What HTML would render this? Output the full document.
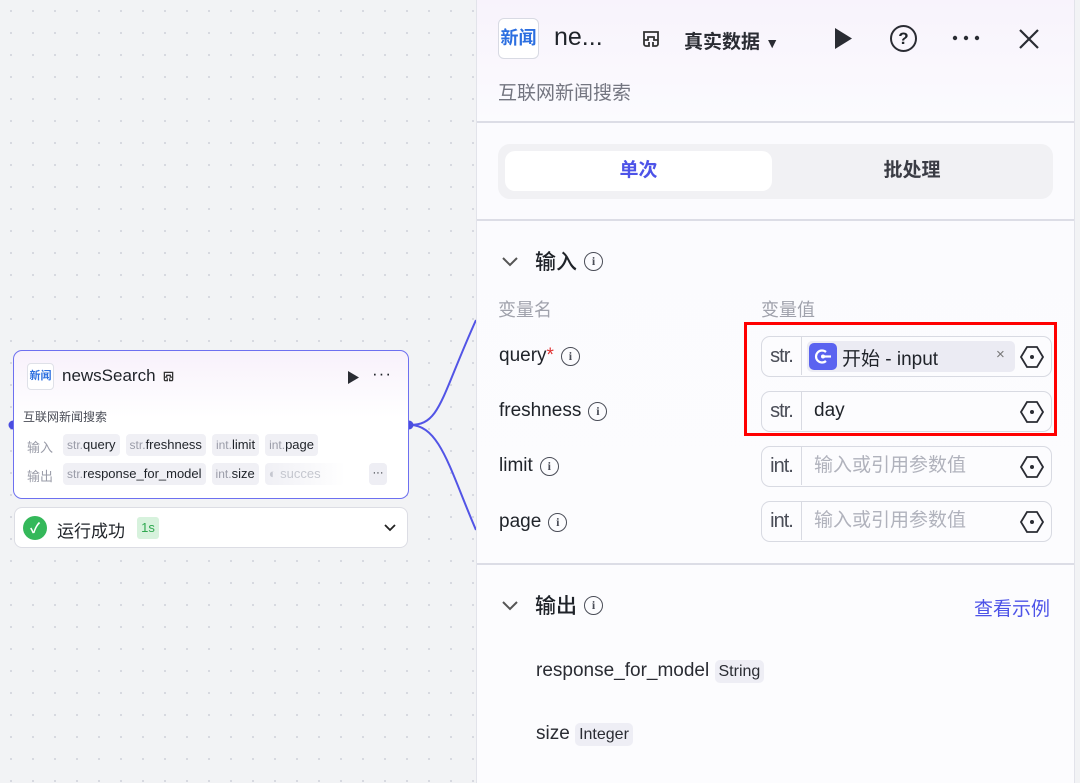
<!DOCTYPE html>
<html><head><meta charset="utf-8"><style>
*{box-sizing:border-box;margin:0;padding:0}
body{width:1080px;height:783px;overflow:hidden;position:relative;font-family:"Liberation Sans","Noto Sans CJK SC",sans-serif;background-color:#f2f3f5;background-image:radial-gradient(#d5d7de 1px,transparent 1.2px);background-size:22px 22px;color:#1f2329}
.abs{position:absolute}
.node{left:13px;top:350px;width:396px;height:149px;border:1.5px solid #6d70f0;border-radius:9px;background:linear-gradient(#f8f1fb,#fff 45%)}
.row{position:absolute;left:49px;display:flex;gap:6px;white-space:nowrap}
.tag{display:inline-block;background:#f0f0f5;border-radius:4px;padding:0 4px;font-size:13px;color:#1f2329;height:22px;line-height:22px}
.tag i{font-style:normal;color:#9a9ca8;font-size:12px}
.panel{left:476px;top:0;width:599px;height:783px;background:linear-gradient(#f8f3fc 0,#fbfbfe 120px,#fcfcfe);border-left:1px solid #e2e3ea;border-right:1px solid #e2e3ea}
.hr{position:absolute;left:0;right:0;height:1.5px;background:#dcdde6}
.lbl{position:absolute;left:22px;font-size:19px;color:#1f2329;display:flex;align-items:center;height:24px}
.info{display:inline-block;width:19px;height:19px;border:1.6px solid #4a4d57;border-radius:50%;font-size:12px;text-align:center;line-height:16px;color:#4a4d57;font-family:"Liberation Serif",serif;font-weight:bold;margin-left:7px}
.inp{position:absolute;left:284px;width:291px;height:41px;border:1.5px solid #d8dae2;border-radius:9px;background:#fcfcfe}
.inp .t{position:absolute;left:0;top:0;width:40px;height:38px;border-right:1.5px solid #d8dae2;font-size:20px;color:#4a4d57;text-align:center;line-height:38px;letter-spacing:-1px}
.inp .v{position:absolute;left:52px;top:0;line-height:38px;font-size:19px}
.inp .ph{color:#b0b2bc}
.hex{position:absolute;right:7px;top:8px}
</style></head><body>
<svg class="abs" style="left:0;top:0" width="480" height="783"><path d="M410 425 C440 425 440 400 476 320" stroke="#5254e6" stroke-width="2" fill="none"/><path d="M410 425 C440 425 450 470 476 530" stroke="#5254e6" stroke-width="2" fill="none"/><circle cx="13" cy="425" r="4.5" fill="#4a4de0"/><circle cx="409" cy="425" r="4.5" fill="#4a4de0"/></svg>
<div class="abs node">
 <div class="abs" style="left:13px;top:12px;width:27px;height:27px;border:1px solid #dfe1e8;border-radius:4px;background:#fff;font-size:11px;color:#2c6fe0;font-weight:bold;text-align:center;line-height:24px">新闻</div>
 <div class="abs" style="left:48px;top:15px;font-size:17px;font-weight:500;display:flex;align-items:center">newsSearch<svg style="margin-left:6px" width="13" height="13" viewBox="0 0 22 22"><path d="M4 4h14v8h-4v-3h-6v3H4z M4 12v4a2 2 0 002 2h3v-4 M18 12v4a2 2 0 01-2 2h-3v-4" stroke="#333" stroke-width="2.2" fill="none"/></svg></div>
 <svg class="abs" style="left:333px;top:20px" width="12" height="13"><path d="M1 0 L12 6.5 L1 13Z" fill="#2a2c33"/></svg>
 <div class="abs" style="left:358px;top:14px;font-size:17px;letter-spacing:1px;line-height:17px">···</div>
 <div class="abs" style="left:9px;top:57px;font-size:12px;color:#4a4d57">互联网新闻搜索</div>
 <div class="abs" style="left:13px;top:86px;font-size:13px;color:#9a9ca8">输入</div>
 <div class="row" style="top:83px"><span class="tag"><i>str.</i>query</span><span class="tag"><i>str.</i>freshness</span><span class="tag"><i>int.</i>limit</span><span class="tag"><i>int.</i>page</span></div>
 <div class="abs" style="left:13px;top:115px;font-size:13px;color:#9a9ca8">输出</div>
 <div class="row" style="top:112px"><span class="tag"><i>str.</i>response_for_model</span><span class="tag"><i>int.</i>size</span><span class="tag" style="color:#c5c7cf;width:80px;overflow:hidden;background:linear-gradient(90deg,#f0f0f5,#fff)">◐ succes</span></div>
 <div class="abs" style="left:355px;top:112px;width:18px;height:22px;background:#eeeef4;border-radius:4px;font-size:11px;text-align:center;line-height:20px">···</div>
</div>
<div class="abs" style="left:14px;top:507px;width:394px;height:41px;background:#fff;border:1px solid #dcdde4;border-radius:8px">
 <div class="abs" style="left:8px;top:8px;width:24px;height:24px;border-radius:50%;background:#34b85a;color:#fff;text-align:center;line-height:24px;font-size:14px;font-weight:bold">✓</div>
 <div class="abs" style="left:42px;top:9px;font-size:17px">运行成功</div>
 <div class="abs" style="left:122px;top:9px;width:22px;height:22px;background:#d7f2dd;color:#2ea84f;border-radius:3px;font-size:13px;text-align:center;line-height:22px">1s</div>
 <svg class="abs" style="left:369px;top:15px" width="12" height="9"><path d="M1 2 L6 7 L11 2" stroke="#222" stroke-width="1.8" fill="none"/></svg>
</div>
<div class="abs panel">
 <div class="abs" style="left:21px;top:18px;width:41px;height:41px;border:1.5px solid #d8dae3;border-radius:6px;background:#fff;font-size:18px;color:#2c6fe0;font-weight:bold;text-align:center;line-height:38px">新闻</div>
 <div class="abs" style="left:77px;top:23px;font-size:25px">ne...</div>
 <svg class="abs" style="left:163px;top:28px" width="22" height="22"><path d="M4 4h14v8h-4v-3h-6v3H4z M4 12v4a2 2 0 002 2h3v-4 M18 12v4a2 2 0 01-2 2h-3v-4" stroke="#333" stroke-width="1.8" fill="none"/></svg>
 <div class="abs" style="left:207px;top:27px;font-size:19px;font-weight:bold;color:#2a2c33">真实数据 <span style="font-size:14px">▼</span></div>
 <svg class="abs" style="left:357px;top:28px" width="18" height="21"><path d="M1 0 L18 10.5 L1 21Z" fill="#2a2c33"/></svg>
 <div class="abs" style="left:413px;top:25px;width:27px;height:27px;border:2.2px solid #2a2c33;border-radius:50%;text-align:center;line-height:23px;font-weight:bold;font-size:17px">?</div>
 <svg class="abs" style="left:474px;top:35px" width="30" height="6"><circle cx="4" cy="3" r="2.2" fill="#2a2c33"/><circle cx="15" cy="3" r="2.2" fill="#2a2c33"/><circle cx="26" cy="3" r="2.2" fill="#2a2c33"/></svg>
 <svg class="abs" style="left:542px;top:29px" width="20" height="20"><path d="M1 1L19 19M19 1L1 19" stroke="#2a2c33" stroke-width="2.2"/></svg>
 <div class="abs" style="left:21px;top:78px;font-size:19px;color:#737580">互联网新闻搜索</div>
 <div class="hr" style="top:121px"></div>
 <div class="abs" style="left:21px;top:144px;width:555px;height:55px;background:#f1f1f4;border-radius:12px">
  <div class="abs" style="left:7px;top:7px;width:267px;height:40px;background:#fff;border-radius:10px;text-align:center;line-height:40px;font-size:19px;color:#4d53e8;font-weight:bold">单次</div>
  <div class="abs" style="left:280px;top:7px;width:268px;height:40px;text-align:center;line-height:40px;font-size:19px;color:#3a3c44;font-weight:bold">批处理</div>
 </div>
 <div class="hr" style="top:219px"></div>
 <svg class="abs" style="left:25px;top:256px" width="16" height="11"><path d="M1 2L8 9L15 2" stroke="#555" stroke-width="2" fill="none"/></svg>
 <div class="lbl" style="left:58px;top:249px;font-size:21px;font-weight:500">输入<span class="info">i</span></div>
 <div class="abs" style="left:21px;top:296px;font-size:18px;color:#a0a2ac">变量名</div>
 <div class="abs" style="left:284px;top:296px;font-size:18px;color:#a0a2ac">变量值</div>
 <div class="lbl" style="top:344px">query<span style="color:#e03030">*</span><span class="info">i</span></div>
 <div class="lbl" style="top:399px">freshness<span class="info">i</span></div>
 <div class="lbl" style="top:454px">limit<span class="info">i</span></div>
 <div class="lbl" style="top:510px">page<span class="info">i</span></div>
 <div class="inp" style="top:336px"><div class="t">str.</div>
  <div class="abs" style="left:45px;top:4px;width:208px;height:31px;background:#ebebf3;border-radius:5px">
   <div class="abs" style="left:2px;top:2px;width:28px;height:27px;background:#5a63f0;border-radius:5px"><svg width="28" height="27"><path d="M17 9a6 6 0 1 0 0 9" stroke="#fff" stroke-width="2.2" fill="none"/><circle cx="14" cy="13.5" r="2" fill="#fff"/><path d="M14 13.5h8" stroke="#fff" stroke-width="2.2"/></svg></div>
   <div class="abs" style="left:35px;top:3px;font-size:19px">开始 - input</div>
   <div class="abs" style="left:189px;top:5px;font-size:15px;color:#777">×</div>
  </div>
  <svg class="hex" width="24" height="24"><path d="M7 2h10l6 10-6 10H7L1 12z" stroke="#2a2c33" stroke-width="1.8" fill="none"/><circle cx="12" cy="12" r="2" fill="#2a2c33"/></svg></div>
 <div class="inp" style="top:391px"><div class="t">str.</div><div class="v">day</div><svg class="hex" width="24" height="24"><path d="M7 2h10l6 10-6 10H7L1 12z" stroke="#2a2c33" stroke-width="1.8" fill="none"/><circle cx="12" cy="12" r="2" fill="#2a2c33"/></svg></div>
 <div class="inp" style="top:446px"><div class="t">int.</div><div class="v ph">输入或引用参数值</div><svg class="hex" width="24" height="24"><path d="M7 2h10l6 10-6 10H7L1 12z" stroke="#2a2c33" stroke-width="1.8" fill="none"/><circle cx="12" cy="12" r="2" fill="#2a2c33"/></svg></div>
 <div class="inp" style="top:501px"><div class="t">int.</div><div class="v ph">输入或引用参数值</div><svg class="hex" width="24" height="24"><path d="M7 2h10l6 10-6 10H7L1 12z" stroke="#2a2c33" stroke-width="1.8" fill="none"/><circle cx="12" cy="12" r="2" fill="#2a2c33"/></svg></div>
 <div class="abs" style="left:267px;top:322px;width:313px;height:114px;border:3px solid #f00"></div>
 <div class="hr" style="top:563px"></div>
 <svg class="abs" style="left:25px;top:600px" width="16" height="11"><path d="M1 2L8 9L15 2" stroke="#555" stroke-width="2" fill="none"/></svg>
 <div class="lbl" style="left:58px;top:593px;font-size:21px;font-weight:500">输出<span class="info">i</span></div>
 <div class="abs" style="left:497px;top:594px;font-size:19px;color:#4d53e8">查看示例</div>
 <div class="abs" style="left:59px;top:660px;font-size:19px;color:#2a2c33">response_for_model <span style="font-size:16px;background:#eeeef5;border-radius:5px;padding:3px 4px">String</span></div>
 <div class="abs" style="left:59px;top:723px;font-size:19px;color:#2a2c33">size <span style="font-size:16px;background:#eeeef5;border-radius:5px;padding:3px 4px">Integer</span></div>
</div>
</body></html>
